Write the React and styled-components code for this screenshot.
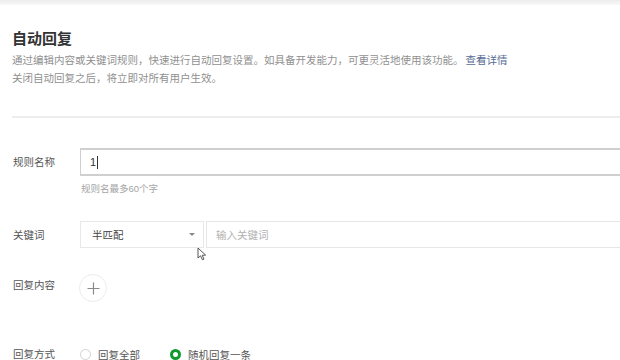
import styled, { createGlobalStyle } from "styled-components";

const GlobalStyle = createGlobalStyle`
  html, body {
    margin: 0;
    padding: 0;
    background: #ffffff;
    overflow: hidden;
  }
  body {
    font-family: "Liberation Sans", "Noto Sans CJK SC", sans-serif;
    color: #353535;
  }
`;

const Page = styled.div`
  width: 620px;
  height: 360px;
  position: relative;
  overflow: hidden;
`;

const TopShade = styled.div`
  height: 5px;
  background: linear-gradient(#ececec, #f9f9f9);
`;

const Header = styled.div`
  padding: 24px 0 0 12px;
`;

const Title = styled.h2`
  margin: 0;
  font-size: 15px;
  line-height: 20px;
  font-weight: 700;
  color: #333;
`;

const Desc = styled.p`
  margin: 2px 0 0;
  font-size: 10.5px;
  line-height: 18px;
  color: #909090;
  white-space: nowrap;
`;

const Link = styled.a`
  color: #576b95;
  text-decoration: none;
  margin-left: 2px;
`;

const Divider = styled.div`
  margin: 29px 0 0 12px;
  height: 2px;
  background: #ededed;
`;

const Form = styled.div`
  padding-left: 13px;
`;

const Row = styled.div`
  display: flex;
  align-items: ${(p) => (p.top ? "flex-start" : "center")};
  margin-top: ${(p) => p.gap}px;
`;

const Label = styled.div`
  width: 67px;
  flex: none;
  font-size: 10.5px;
  line-height: 20px;
  color: #555;
  margin-top: ${(p) => p.offset || 0}px;
`;

const TextBox = styled.div`
  flex: 1;
  height: 28px;
  box-sizing: border-box;
  border: 1px solid ${(p) => (p.strong ? "#cfcfcf" : "#e6e6e6")};
  border-width: ${(p) => (p.strong ? "2px 1px" : "1px")};
  margin-right: -10px;
  display: flex;
  align-items: center;
  padding-left: 9px;
  font-size: 11px;
  color: ${(p) => (p.placeholder ? "#b2b2b2" : "#333")};
`;

const Caret = styled.span`
  display: inline-block;
  width: 1px;
  height: 13px;
  background: #333;
  margin-left: 1px;
`;

const Hint = styled.div`
  margin: 6px 0 0 68px;
  font-size: 9.5px;
  line-height: 14px;
  color: #a5a5a5;
`;

const Select = styled.div`
  width: 124px;
  height: 27px;
  box-sizing: border-box;
  border: 1px solid #e8e8e8;
  display: flex;
  align-items: center;
  justify-content: space-between;
  padding: 0 8px 0 11px;
  font-size: 10.5px;
  color: #444;
  margin-right: 2px;
  flex: none;
`;

const Arrow = styled.span`
  width: 0;
  height: 0;
  border-left: 3px solid transparent;
  border-right: 3px solid transparent;
  border-top: 3px solid #888;
`;

const KeywordBox = styled(TextBox)`
  height: 27px;
  font-size: 10.5px;
`;

const AddButton = styled.div`
  width: 28px;
  height: 28px;
  box-sizing: border-box;
  border: 1px solid #ececec;
  border-radius: 50%;
  display: flex;
  align-items: center;
  justify-content: center;
  margin-left: -1px;
`;

const RadioItem = styled.label`
  display: flex;
  align-items: center;
  font-size: 10.5px;
  color: #555;
  margin-right: 30px;
`;

const RadioDot = styled.span`
  width: 11px;
  height: 11px;
  box-sizing: border-box;
  border-radius: 50%;
  margin-right: 7px;
  border: ${(p) => (p.checked ? "3px solid #0e9a2f" : "1px solid #d2d2d2")};
  background: #fff;
`;

const RadioGroup = styled.div`
  display: flex;
  align-items: center;
  padding-left: 0;
`;

const Pointer = styled.svg`
  position: absolute;
  left: 197px;
  top: 247px;
`;

export default function App() {
  return (
    <Page>
      <GlobalStyle />
      <TopShade />
      <Header>
        <Title>自动回复</Title>
        <Desc>
          通过编辑内容或关键词规则，快速进行自动回复设置。如具备开发能力，可更灵活地使用该功能。
          <Link>查看详情</Link>
          <br />
          关闭自动回复之后，将立即对所有用户生效。
        </Desc>
      </Header>
      <Divider />
      <Form>
        <Row gap={30}>
          <Label>规则名称</Label>
          <TextBox strong>
            1<Caret />
          </TextBox>
        </Row>
        <Hint>规则名最多60个字</Hint>
        <Row gap={25}>
          <Label>关键词</Label>
          <Select>
            半匹配
            <Arrow />
          </Select>
          <KeywordBox placeholder>输入关键词</KeywordBox>
        </Row>
        <Row gap={26} top>
          <Label offset={1}>回复内容</Label>
          <AddButton>
            <svg width="13" height="13" viewBox="0 0 13 13">
              <path d="M6.5 0.5v12M0.5 6.5h12" stroke="#8a8a8a" strokeWidth="1.2" />
            </svg>
          </AddButton>
        </Row>
        <Row gap={42}>
          <Label>回复方式</Label>
          <RadioGroup>
            <RadioItem>
              <RadioDot />
              回复全部
            </RadioItem>
            <RadioItem>
              <RadioDot checked />
              随机回复一条
            </RadioItem>
          </RadioGroup>
        </Row>
      </Form>
      <Pointer width="10" height="14" viewBox="0 0 10 14">
        <path
          d="M1 1 L1 11 L3.5 8.8 L5.4 12.8 L7 12.1 L5.2 8.3 L8.6 8.1 Z"
          fill="#fff"
          stroke="#444"
          strokeWidth="0.9"
          strokeLinejoin="round"
        />
      </Pointer>
    </Page>
  );
}
